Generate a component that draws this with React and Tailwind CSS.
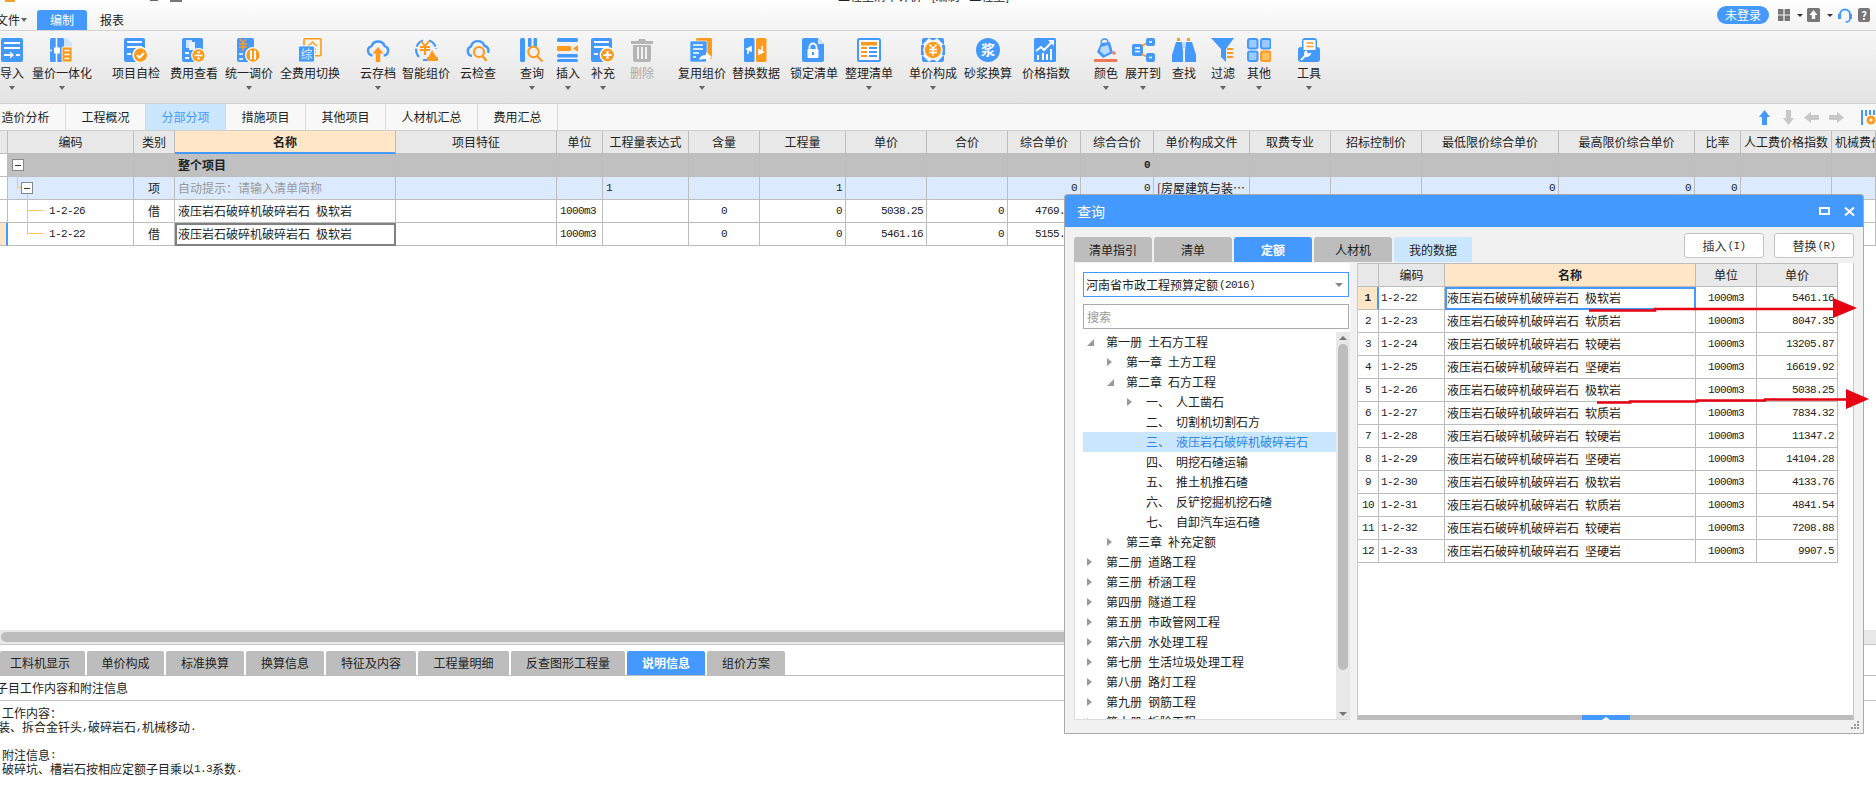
import React from "react";

const B = "#4499ff";
const O = "#ff9a1e";
const mono = "font-['Liberation_Mono'] text-[11px] tracking-[-0.6px]";

function Ic({ children, w = 24, h = 24 }) {
  return (
    <svg width={w} height={h} viewBox="0 0 24 24" className="block shrink-0">
      {children}
    </svg>
  );
}

// toolbar icons, one 24x24 drawing each
const icons = {
  import: (
    <>
      <rect x="1" width="22" height="24" rx="2" fill={B} />
      <path d="M4 5h16M4 10h16M16 17h4" stroke="#fff" strokeWidth="2" />
      <path d="M4 17h7" stroke="#fff" strokeWidth="2" />
      <path d="M10 13.5l4 3.5-4 3.5z" fill="#fff" />
    </>
  ),
  unify: (
    <>
      <rect x="0" width="14" height="24" rx="1.5" fill={B} />
      <path d="M14 0h3l5 5v6h-8z" fill="#cfe4fb" />
      <path d="M6.5 0v24" stroke="#fff" strokeWidth="1.5" />
      <rect x="4" y="9.5" width="6" height="6" fill="#fff" />
      <path d="M0 12.5h2" stroke="#fff" strokeWidth="1.5" />
      <rect x="12" y="9" width="10" height="15" rx="1" fill={O} stroke="#fff" strokeWidth=".8" />
      <path d="M14.5 12.5h5M14.5 16.5h5M14.5 20.5h5" stroke="#fff" strokeWidth="1.7" />
    </>
  ),
  check: (
    <>
      <rect width="21" height="24" rx="2" fill={B} />
      <path d="M3 4h15M3 9h15M3 16h4" stroke="#fff" strokeWidth="1.8" />
      <circle cx="16.5" cy="17" r="7.4" fill={O} stroke="#fff" strokeWidth="1.5" />
      <path d="M13 17l2.5 2.7 4.5-4.7" fill="none" stroke="#fff" strokeWidth="2" />
    </>
  ),
  fee: (
    <>
      <rect width="21" height="24" rx="2" fill={B} />
      <rect x="4" y="2" width="6" height="8" fill="#cfe4fb" />
      <rect x="7" y="4" width="6" height="8" fill="#e8f2fe" />
      <path d="M3 15h4M3 20h4" stroke="#fff" strokeWidth="1.8" />
      <circle cx="16.5" cy="17.5" r="6.8" fill={O} stroke="#fff" strokeWidth="1.2" />
      <path d="M12.5 17.5h8" stroke="#fff" strokeWidth="1.6" />
      <circle cx="16.5" cy="14.5" r="1.2" fill="#fff" />
      <circle cx="16.5" cy="20.5" r="1.2" fill="#fff" />
    </>
  ),
  adjust: (
    <>
      <rect width="17" height="24" rx="2" fill={B} />
      <path d="M3 1l3 4 3-4M2 6h8M2 9h8M6 5v8" fill="none" stroke={O} strokeWidth="1.6" />
      <path d="M2 16h4M2 21h4" stroke="#fff" strokeWidth="1.6" />
      <circle cx="16" cy="17" r="7.4" fill={O} stroke="#fff" strokeWidth="1.4" />
      <path d="M14 12.5v9M18 12.5v9" stroke="#fff" strokeWidth="2" />
    </>
  ),
  full: (
    <>
      <rect x="6" y="0.8" width="17" height="17" rx="1" fill="#fff5e6" stroke={O} strokeWidth="1.6" />
      <path d="M10 8l4.5-4 4.5 4M11 11h7M11 14h7" fill="none" stroke={O} strokeWidth="1.3" />
      <rect x="0.5" y="8" width="16" height="16" rx="1.5" fill={B} stroke="#fff" strokeWidth=".8" />
      <text x="8.5" y="20.5" textAnchor="middle" fontSize="12" fill="#dcecff">综</text>
    </>
  ),
  cloudUp: (
    <>
      <path d="M6.5 17.5a4.8 4.8 0 0 1-1-9.4 7 7 0 0 1 13.2 0 4.8 4.8 0 0 1-1 9.4" fill="none" stroke={B} strokeWidth="2.4" />
      <path d="M12 9l-5.5 6.5h3.3V24h4.4v-8.5h3.3z" fill={O} />
    </>
  ),
  smart: (
    <>
      <path d="M5 19A10 10 0 0 1 9 2.5M15 2.5A10 10 0 0 1 22 11M9 22h6" fill="none" stroke={B} strokeWidth="2.2" strokeDasharray="9 2" />
      <path d="M7 3l4 5 4-5M6 9h10M6 12h10M11 8v9" fill="none" stroke={O} strokeWidth="2" />
      <path d="M18 12l4.5 7h1.5v4h-11v-4h1.5z" fill={O} />
    </>
  ),
  cloudSearch: (
    <>
      <path d="M6 18a5 5 0 0 1-1-9.6 7 7 0 0 1 13.4-.6 5 5 0 0 1 3.6 7" fill="none" stroke={B} strokeWidth="2.4" />
      <circle cx="13" cy="14" r="5" fill="none" stroke={O} strokeWidth="2.2" />
      <path d="M16.5 18l4 5" stroke={O} strokeWidth="2.4" />
    </>
  ),
  query: (
    <>
      <rect x="0" width="5" height="24" rx="1.5" fill={B} />
      <rect x="8" width="3.5" height="9" rx="1" fill={B} />
      <rect x="13.5" width="3.5" height="9" rx="1" fill={B} />
      <circle cx="13.5" cy="14" r="5.2" fill="none" stroke={O} strokeWidth="2" />
      <path d="M17 18l5.5 5.5" stroke={O} strokeWidth="2.2" />
    </>
  ),
  insert: (
    <>
      <rect x="1" y="0" width="21" height="4" rx="1.5" fill={B} />
      <rect x="1" y="8" width="14" height="5" rx="1" fill={O} />
      <path d="M22 7v7l-5-3.5z" fill={O} />
      <rect x="1" y="16" width="21" height="3.5" rx="1.5" fill={B} />
      <rect x="1" y="21" width="21" height="3" rx="1.5" fill={B} />
    </>
  ),
  add: (
    <>
      <rect width="21" height="24" rx="2" fill={B} />
      <path d="M3 4h15M3 9h15M3 16h4" stroke="#fff" strokeWidth="1.8" />
      <circle cx="16.5" cy="17" r="7.2" fill={O} stroke="#fff" strokeWidth="1.4" />
      <path d="M16.5 13v8M12.5 17h8" stroke="#fff" strokeWidth="2.2" />
    </>
  ),
  trash: (
    <>
      <path d="M9 1h6l1 2h7v3H1V3h7z" fill="#b5b5b5" />
      <path d="M3 7h18v15a2 2 0 0 1-2 2H5a2 2 0 0 1-2-2z" fill="#b5b5b5" />
      <path d="M8 9v12M12 9v12M16 9v12" stroke="#fff" strokeWidth="1.6" />
    </>
  ),
  reuse: (
    <>
      <rect x="6" width="16" height="21" rx="1.5" fill={O} />
      <rect x="0" y="3" width="17" height="21" rx="1.5" fill={B} stroke="#fff" strokeWidth=".6" />
      <path d="M3 7h10M3 11h10M3 15h6M3 19h3" stroke="#fff" strokeWidth="1.5" />
      <path d="M9 22c1-4 4-5 7-5v-3l6 5-6 5v-3c-2 0-5 0-7 1z" fill="#fff" />
    </>
  ),
  replace: (
    <>
      <rect x="0" width="10.5" height="24" rx="1.5" fill={B} />
      <rect x="12" width="10.5" height="24" rx="1.5" fill={O} />
      <path d="M4 16v-5M3 11l4-2v4z" stroke="#fff" strokeWidth="1.6" fill="#fff" />
      <path d="M18 8v6M19 14l-4 2v-4z" stroke="#fff" strokeWidth="1.6" fill="#fff" />
    </>
  ),
  lock: (
    <>
      <path d="M2 0h14l6 6v16a2 2 0 0 1-2 2H2a2 2 0 0 1-2-2V2a2 2 0 0 1 2-2z" fill={B} />
      <path d="M16 0l6 6h-6z" fill="#cfe4fb" />
      <path d="M7.5 12V9a3.5 3.5 0 0 1 7 0v3" fill="none" stroke="#fff" strokeWidth="1.8" />
      <rect x="5.5" y="11" width="11" height="9" rx="1" fill="#fff" />
      <path d="M11 14v3" stroke={B} strokeWidth="2" />
    </>
  ),
  arrange: (
    <>
      <rect x="1" y="1" width="22" height="22" rx="1.5" fill="#fff" stroke={B} strokeWidth="2" />
      <rect x="4" y="4" width="16" height="3.5" fill={O} />
      <path d="M4 10h6M4 14h6M4 18h6" stroke={O} strokeWidth="2" />
      <path d="M12 10h8M12 14h8M12 18h8" stroke={B} strokeWidth="2" />
    </>
  ),
  unit: (
    <>
      <path d="M1 7V2a2 2 0 0 1 2-2h5zM23 7V2a2 2 0 0 0-2-2h-5zM1 17v5a2 2 0 0 0 2 2h5zM23 17v5a2 2 0 0 1-2 2h-5z" fill={B} />
      <rect x="0" y="7" width="3" height="10" fill={B} />
      <rect x="21" y="7" width="3" height="10" fill={B} />
      <path d="M8 0h8L12 3zM8 24h8l-4-3z" fill={B} />
      <circle cx="12" cy="12" r="9" fill={O} stroke="#fff" strokeWidth="1.6" />
      <path d="M8.5 6.5l3.5 4 3.5-4M8 11.5h8M8 14.5h8M12 10.5v7" fill="none" stroke="#fff" strokeWidth="1.5" />
    </>
  ),
  mortar: (
    <>
      <circle cx="12" cy="12" r="12" fill={B} />
      <text x="12" y="17" textAnchor="middle" fontSize="14" fontWeight="700" fill="#fff">浆</text>
    </>
  ),
  index: (
    <>
      <rect x="0" width="22" height="24" rx="1.5" fill={B} />
      <path d="M2 13l5-4 3 3 8-8" fill="none" stroke="#fff" strokeWidth="2" />
      <path d="M14 2h6v6z" fill="#fff" />
      <path d="M4 22v-5M9 22v-7M13 22v-6M17 22V11" stroke="#fff" strokeWidth="2" />
    </>
  ),
  color: (
    <>
      <path d="M7 5l9-1 3 11-10 5-6-6z" fill={B} />
      <path d="M7 9l7-2 2 7-6 3-4-4z" fill="#bcd9fb" />
      <path d="M7 5c0-3 2-4 4-4s3 1 3 4" fill="none" stroke={B} strokeWidth="1.4" />
      <circle cx="20" cy="15" r="1.8" fill="#f47a55" />
      <rect x="0" y="21" width="23" height="3" fill="#f47a55" />
    </>
  ),
  expand: (
    <>
      <rect x="1" y="6" width="11" height="12" rx="2" fill={B} />
      <path d="M4 10h5M4 13.5h5" stroke="#fff" strokeWidth="1.4" />
      <path d="M11 8l5-3M11 16l5 3" stroke={O} strokeWidth="1.6" />
      <rect x="15" y="0" width="9" height="8" rx="2" fill={B} />
      <rect x="15" y="15" width="9" height="9" rx="2" fill={B} />
      <path d="M18 4h3M18 19.5h3" stroke="#fff" strokeWidth="1.4" />
    </>
  ),
  find: (
    <>
      <path d="M5 0h3v3H5zM15 0h3v3h-3z" fill={O} />
      <path d="M4 4h6l1 9v11H0v-7z" fill={B} />
      <path d="M20 4h-6l-1 9v11h11v-7z" fill={B} />
      <path d="M11 4h2v6h-2z" fill="#bcd9fb" />
    </>
  ),
  filter: (
    <>
      <path d="M0 0h23l-8 11v13l-5-5v-8z" fill={B} />
      <path d="M16 11h6M16 15h6M16 19h6" stroke={O} strokeWidth="1.8" />
    </>
  ),
  more: (
    <>
      <rect x="1" y="1" width="9.5" height="9.5" rx="2" fill="#9cc9ff" stroke={B} strokeWidth="2" />
      <rect x="14" y="1" width="9.5" height="9.5" rx="2" fill="#9cc9ff" stroke={B} strokeWidth="2" />
      <rect x="1" y="13.5" width="9.5" height="9.5" rx="2" fill="#9cc9ff" stroke={B} strokeWidth="2" />
      <rect x="14" y="13.5" width="9.5" height="9.5" rx="2" fill="#ffc166" stroke={O} strokeWidth="2" />
    </>
  ),
  tool: (
    <>
      <path d="M5 10V3a3 3 0 0 1 3-3h9a3 3 0 0 1 3 3v7" fill={B} />
      <rect x="1" y="9" width="22" height="15" rx="3" fill={B} />
      <rect x="6.5" y="2" width="12" height="10" fill="#fff" />
      <path d="M9.5 5h7M9.5 8.5h7" stroke={O} strokeWidth="1.6" />
      <path d="M4 22l6-6M9 13.5c-1.5 1-1.5 3 0 4.5 2 .5 3.5-.5 4-2l-2 .5-1.2-1.2z" stroke="#fff" strokeWidth="1.8" fill="#fff" />
    </>
  ),
};

const tools = [
  { k: "import", t: "导入", w: "w-[24px]", ml: "", c: 1 },
  { k: "unify", t: "量价一体化", w: "w-[60px]", ml: "ml-[8px]", c: 1 },
  { k: "check", t: "项目自检", w: "w-[48px]", ml: "ml-[20px]" },
  { k: "fee", t: "费用查看", w: "w-[48px]", ml: "ml-[10px]" },
  { k: "adjust", t: "统一调价", w: "w-[48px]", ml: "ml-[7px]", c: 1 },
  { k: "full", t: "全费用切换", w: "w-[60px]", ml: "ml-[7px]" },
  { k: "cloudUp", t: "云存档", w: "w-[36px]", ml: "ml-[20px]", c: 1 },
  { k: "smart", t: "智能组价", w: "w-[48px]", ml: "ml-[6px]" },
  { k: "cloudSearch", t: "云检查", w: "w-[36px]", ml: "ml-[10px]" },
  { k: "query", t: "查询", w: "w-[24px]", ml: "ml-[24px]", c: 1 },
  { k: "insert", t: "插入", w: "w-[24px]", ml: "ml-[12px]", c: 1 },
  { k: "add", t: "补充", w: "w-[24px]", ml: "ml-[11px]", c: 1 },
  { k: "trash", t: "删除", w: "w-[24px]", ml: "ml-[15px]", gray: 1 },
  { k: "reuse", t: "复用组价", w: "w-[48px]", ml: "ml-[24px]", c: 1 },
  { k: "replace", t: "替换数据", w: "w-[48px]", ml: "ml-[6px]" },
  { k: "lock", t: "锁定清单", w: "w-[48px]", ml: "ml-[10px]" },
  { k: "arrange", t: "整理清单", w: "w-[48px]", ml: "ml-[7px]", c: 1 },
  { k: "unit", t: "单价构成", w: "w-[48px]", ml: "ml-[16px]", c: 1 },
  { k: "mortar", t: "砂浆换算", w: "w-[48px]", ml: "ml-[7px]" },
  { k: "index", t: "价格指数", w: "w-[48px]", ml: "ml-[10px]" },
  { k: "color", t: "颜色", w: "w-[24px]", ml: "ml-[24px]", c: 1 },
  { k: "expand", t: "展开到", w: "w-[36px]", ml: "ml-[7px]", c: 1 },
  { k: "find", t: "查找", w: "w-[24px]", ml: "ml-[11px]" },
  { k: "filter", t: "过滤", w: "w-[24px]", ml: "ml-[15px]", c: 1 },
  { k: "more", t: "其他", w: "w-[24px]", ml: "ml-[12px]", c: 1 },
  { k: "tool", t: "工具", w: "w-[24px]", ml: "ml-[26px]", c: 1 },
];

const pageTabs = [
  ["造价分析", "w-[66px] pr-[14px]"],
  ["工程概况", "w-[80px]"],
  ["分部分项", "w-[80px]"],
  ["措施项目", "w-[80px]"],
  ["其他项目", "w-[80px]"],
  ["人材机汇总", "w-[92px]"],
  ["费用汇总", "w-[80px]"],
];

const cols =
  "grid grid-cols-[8px_126px_41px_221px_161px_46px_86px_71px_86px_81px_81px_73px_73px_96px_81px_91px_137px_136px_46px_91px_44px]";
const heads = ["", "编码", "类别", "名称", "项目特征", "单位", "工程量表达式", "含量", "工程量", "单价", "合价", "综合单价", "综合合价", "单价构成文件", "取费专业", "招标控制价", "最低限价综合单价", "最高限价综合单价", "比率", "人工费价格指数", "机械费价格指数"];
const rightCols = [8, 9, 10, 11, 12, 16, 17, 18];
const monoCols = [5, 6, 7, 8, 9, 10, 11, 12, 16, 17, 18];

const rows = [
  { bg: "bg-[#c0c0c0]", cells: { 3: "整个项目", 12: "0" }, bold: true },
  { bg: "bg-[#dceafe]", cells: { 2: "项", 3: "自动提示：请输入清单简称", 6: "1", 8: "1", 11: "0", 12: "0", 13: "[房屋建筑与装…", 16: "0", 17: "0", 18: "0" } },
  { bg: "bg-white", cells: { 1: "1-2-26", 2: "借", 3: "液压岩石破碎机破碎岩石\u2002极软岩", 5: "1000m3", 7: "0", 8: "0", 9: "5038.25", 10: "0", 11: "4769.36" } },
  { bg: "bg-white", cells: { 1: "1-2-22", 2: "借", 3: "液压岩石破碎机破碎岩石\u2002极软岩", 5: "1000m3", 7: "0", 8: "0", 9: "5461.16", 10: "0", 11: "5155.18" } },
];

const bottomTabs = [
  ["工料机显示", "w-[85px] pr-[5px]"],
  ["单价构成", "w-[77px]"],
  ["标准换算", "w-[78px]"],
  ["换算信息", "w-[78px]"],
  ["特征及内容", "w-[90px]"],
  ["工程量明细", "w-[91px]"],
  ["反查图形工程量", "w-[114px]"],
  ["说明信息", "w-[78px]"],
  ["组价方案", "w-[78px]"],
];

const tree = [
  ["第一册\u2002土石方工程", "pl-[4px]", "open"],
  ["第一章\u2002土方工程", "pl-[24px]", "closed"],
  ["第二章\u2002石方工程", "pl-[24px]", "open"],
  ["一、\u2002人工凿石", "pl-[44px]", "closed"],
  ["二、\u2002切割机切割石方", "pl-[44px]", ""],
  ["三、\u2002液压岩石破碎机破碎岩石", "pl-[44px]", "", true],
  ["四、\u2002明挖石碴运输", "pl-[44px]", ""],
  ["五、\u2002推土机推石碴", "pl-[44px]", ""],
  ["六、\u2002反铲挖掘机挖石碴", "pl-[44px]", ""],
  ["七、\u2002自卸汽车运石碴", "pl-[44px]", ""],
  ["第三章\u2002补充定额", "pl-[24px]", "closed"],
  ["第二册\u2002道路工程", "pl-[4px]", "closed"],
  ["第三册\u2002桥涵工程", "pl-[4px]", "closed"],
  ["第四册\u2002隧道工程", "pl-[4px]", "closed"],
  ["第五册\u2002市政管网工程", "pl-[4px]", "closed"],
  ["第六册\u2002水处理工程", "pl-[4px]", "closed"],
  ["第七册\u2002生活垃圾处理工程", "pl-[4px]", "closed"],
  ["第八册\u2002路灯工程", "pl-[4px]", "closed"],
  ["第九册\u2002钢筋工程", "pl-[4px]", "closed"],
  ["第十册\u2002拆除工程", "pl-[4px]", "closed"],
];

const quotas = [
  ["1-2-22", "极软岩", "5461.16"],
  ["1-2-23", "软质岩", "8047.35"],
  ["1-2-24", "较硬岩", "13205.87"],
  ["1-2-25", "坚硬岩", "16619.92"],
  ["1-2-26", "极软岩", "5038.25"],
  ["1-2-27", "软质岩", "7834.32"],
  ["1-2-28", "较硬岩", "11347.2"],
  ["1-2-29", "坚硬岩", "14104.28"],
  ["1-2-30", "极软岩", "4133.76"],
  ["1-2-31", "软质岩", "4841.54"],
  ["1-2-32", "较硬岩", "7208.88"],
  ["1-2-33", "坚硬岩", "9907.5"],
];

const qCols = "grid grid-cols-[21px_66px_251px_61px_81px] w-[480px]";
const qCell = "h-[23px] border-r border-b border-[#bdbdbd] flex items-center overflow-hidden whitespace-nowrap";

function Caret({ className = "" }) {
  return <span className={"block w-0 h-0 border-l-[3px] border-r-[3px] border-t-[4px] border-l-transparent border-r-transparent border-t-[#666] " + className} />;
}

function ToolItem({ item }) {
  return (
    <div className={"shrink-0 flex flex-col items-center " + item.w + " " + item.ml}>
      <Ic>{icons[item.k]}</Ic>
      <div className={"mt-[3px] h-[16px] leading-[16px] whitespace-nowrap " + (item.gray ? "text-[#aaa]" : "")}>{item.t}</div>
      {item.c ? <Caret className="mt-[5px]" /> : null}
    </div>
  );
}

function MinusBox({ className }) {
  return (
    <span className={"absolute w-[12px] h-[12px] bg-white border border-[#888] flex items-center justify-center z-10 " + className}>
      <span className="block w-[6px] h-px bg-[#333]" />
    </span>
  );
}

function TreeArrow({ type }) {
  if (type === "open") {
    return (
      <svg width="7" height="7" viewBox="0 0 7 7" className="block">
        <path d="M7 0v7H0z" fill="#999" />
      </svg>
    );
  }
  if (type === "closed") {
    return (
      <svg width="5" height="8" viewBox="0 0 5 8" className="block">
        <path d="M0 0l5 4-5 4z" fill="#999" />
      </svg>
    );
  }
  return null;
}

function CodeCell({ index }) {
  return (
    <>
      {index === 0 && <MinusBox className="left-[4px] top-[5px]" />}
      {index === 1 && (
        <>
          <MinusBox className="left-[13px] top-[5px]" />
          <span className="absolute left-[9px] top-[-6px] w-px h-[17px] bg-[#ffc266]" />
          <span className="absolute left-[9px] top-[10px] w-[5px] h-px bg-[#ffc266]" />
          <span className="absolute left-[19px] top-[17px] w-px h-[6px] bg-[#ffc266]" />
        </>
      )}
      {index === 2 && (
        <>
          <span className="absolute left-[19px] top-0 w-px h-[23px] bg-[#ffc266]" />
          <span className="absolute left-[19px] top-[10px] w-[17px] h-px bg-[#ffc266]" />
        </>
      )}
      {index === 3 && (
        <>
          <span className="absolute left-[19px] top-0 w-px h-[11px] bg-[#ffc266]" />
          <span className="absolute left-[19px] top-[10px] w-[17px] h-px bg-[#ffc266]" />
        </>
      )}
    </>
  );
}

function MainTable() {
  return (
    <div className="h-[499px] shrink-0 overflow-hidden bg-white">
      <div className={cols + " bg-[#e8e8e8]"}>
        {heads.map((h, i) => (
          <div
            key={i}
            className={
              "h-[23px] flex items-center border-r border-b border-[#bdbdbd] overflow-hidden whitespace-nowrap " +
              (i === 20 ? "justify-start pl-[3px] " : "justify-center ") +
              (i === 3 ? "bg-[#ffe6c7] font-bold border-b-2 border-b-[#4499ff]" : "")
            }
          >
            {h}
          </div>
        ))}
      </div>
      {rows.map((row, r) => (
        <div key={r} className={cols}>
          {heads.map((_, i) => {
            const val = row.cells[i];
            let cls = "relative h-[23px] flex items-center border-b border-[#bdbdbd] whitespace-nowrap min-w-0 ";
            if (i === 0) {
              cls += r === 3 ? "bg-[#ffe6c7] border-r-2 border-r-[#4499ff] " : "bg-white border-r border-r-[#bdbdbd] ";
            } else {
              cls += row.bg + " border-r border-r-[#bdbdbd] ";
            }
            if (i === 0) cls += "";
            else if (rightCols.includes(i)) cls += "justify-end pr-[3px] ";
            else if (i === 2 || i === 7) cls += "justify-center ";
            else if (i === 1) cls += "pl-[41px] ";
            else cls += "pl-[3px] ";
            if (r === 3 && i === 3) cls += "outline-2 -outline-offset-2 outline-[#808080] ";
            return (
              <div key={i} className={cls}>
                {i === 1 && <CodeCell index={r} />}
                {val !== undefined && (
                  <span
                    className={
                      (monoCols.includes(i) || i === 1 ? mono + " " : "") +
                      (row.bold ? "font-bold " : "") +
                      (r === 1 && i === 3 ? "text-[#999]" : "")
                    }
                  >
                    {val}
                  </span>
                )}
              </div>
            );
          })}
        </div>
      ))}
    </div>
  );
}

function QueryDialog() {
  return (
    <div className="absolute left-[1064px] top-[194px] w-[800px] h-[540px] bg-[#f1f1f1] border border-[#aaa] rounded-t-[3px] z-20 flex flex-col">
      <div className="h-[32px] shrink-0 bg-[#4499ff] rounded-t-[2px] flex items-center pl-[12px] text-white text-[14px]">
        查询
        <span className="ml-auto mr-[14px] w-[11px] h-[8px] border-2 border-white" />
        <svg width="11" height="9" viewBox="0 0 11 9" className="block mr-[8px]">
          <path d="M1 .5l9 8M10 .5l-9 8" stroke="#fff" strokeWidth="2" />
        </svg>
      </div>
      <div className="h-[36px] shrink-0 flex items-start pl-[9px]">
        <div className="mt-[10px] flex gap-[2px]">
          {["清单指引", "清单", "定额", "人材机", "我的数据"].map((t) => (
            <div
              key={t}
              className={
                "w-[78px] h-[25px] rounded-t-[3px] flex items-center justify-center " +
                (t === "定额" ? "bg-[#4499ff] text-white font-bold" : t === "我的数据" ? "bg-[#cbe6ff]" : "bg-[#bdbdbd]")
              }
            >
              {t}
            </div>
          ))}
        </div>
        <div className="ml-auto mr-[9px] mt-[6px] flex gap-[10px]">
          {["插入", "替换"].map((t, i) => (
            <button key={t} className="w-[80px] h-[25px] bg-white border border-[#c4c4c4] rounded-[3px] flex items-center justify-center text-[#333]">
              {t}
              <span className={mono + " ml-px"}>{i === 0 ? "(I)" : "(R)"}</span>
            </button>
          ))}
        </div>
      </div>
      <div className="h-[457px] shrink-0 flex pl-[9px]">
        <div className="w-[276px] bg-white border-l border-b border-[#dcdcdc] pl-[8px] pt-[9px] flex flex-col">
          <div className="w-[266px] h-[25px] shrink-0 border border-[#4499ff] flex items-center pl-[2px] pr-[5px]">
            河南省市政工程预算定额<span className={mono + " ml-[1px]"}>(2016)</span>
            <span className="ml-auto block w-0 h-0 border-l-[4px] border-r-[4px] border-t-[4px] border-l-transparent border-r-transparent border-t-[#888]" />
          </div>
          <div className="w-[266px] h-[25px] shrink-0 mt-[7px] border border-[#aaa] flex items-center pl-[3px] text-[#999]">搜索</div>
          <div className="h-[388px] mt-[3px] flex overflow-hidden">
            <div className="w-[253px] overflow-hidden">
              {tree.map(([t, pad, arrow, sel]) => (
                <div key={t} className={"h-[20px] shrink-0 flex items-center whitespace-nowrap " + pad + (sel ? " bg-[#cbe6ff] text-[#2b84e8]" : "")}>
                  <span className="w-[19px] shrink-0">
                    <TreeArrow type={arrow} />
                  </span>
                  {t}
                </div>
              ))}
            </div>
            <div className="w-[14px] bg-[#e8e8e8] flex flex-col items-center">
              <span className="mt-[4px] block w-0 h-0 border-l-[4px] border-r-[4px] border-b-[4px] border-l-transparent border-r-transparent border-b-[#777]" />
              <span className="mt-[4px] w-[10px] h-[326px] rounded-[5px] bg-[#bdbdbd]" />
              <span className="mt-auto mb-[3px] block w-0 h-0 border-l-[4px] border-r-[4px] border-t-[4px] border-l-transparent border-r-transparent border-t-[#777]" />
            </div>
          </div>
        </div>
        <div className="ml-[7px] w-[497px] bg-white border-x border-[#c8c8c8] flex flex-col">
          <div className={qCols + " bg-[#e8e8e8] border-t border-[#bdbdbd] h-[24px]"}>
            {["", "编码", "名称", "单位", "单价"].map((h, i) => (
              <div key={i} className={qCell + " justify-center " + (i === 2 ? "bg-[#ffe6c7] font-bold" : "")}>
                {h}
              </div>
            ))}
          </div>
          {quotas.map(([code, rock, price], i) => (
            <div key={code} className={qCols}>
              <div className={qCell + " justify-center " + (i === 0 ? "bg-[#ffe6c7] font-bold border-r-2 border-r-[#4499ff]" : "")}>
                <span className={mono}>{i + 1}</span>
              </div>
              <div className={qCell + " pl-[2px]"}>
                <span className={mono}>{code}</span>
              </div>
              <div className={qCell + " pl-[2px] " + (i === 0 ? "outline-2 -outline-offset-2 outline-[#4499ff]" : "")}>
                液压岩石破碎机破碎岩石{"\u2002"}
                {rock}
              </div>
              <div className={qCell + " justify-center"}>
                <span className={mono}>1000m3</span>
              </div>
              <div className={qCell + " justify-end pr-[3px]"}>
                <span className={mono}>{price}</span>
              </div>
            </div>
          ))}
          <div className="mt-auto h-[5px] bg-[#bdbdbd] flex justify-center">
            <span className="w-[48px] h-[5px] bg-[#4499ff] flex items-end justify-center">
              <span className="block w-0 h-0 border-l-[4px] border-r-[4px] border-b-[3px] border-l-transparent border-r-transparent border-b-white" />
            </span>
          </div>
        </div>
      </div>
      <svg width="10" height="9" viewBox="0 0 10 9" className="absolute right-[3px] bottom-[3px]">
        <path d="M7 0h2v2H7zM4 3h2v2H4zM7 3h2v2H7zM1 6h2v2H1zM4 6h2v2H4zM7 6h2v2H7z" fill="#999" />
      </svg>
    </div>
  );
}

export default function App() {
  return (
    <div className="relative w-[1876px] h-[797px] overflow-hidden bg-white flex flex-col text-[12px] leading-[14px] text-[#222] font-['Noto_Sans_CJK_SC','Liberation_Sans',sans-serif]">
      {/* title bar, the window is cut off at the top */}
      <div className="relative h-[31px] shrink-0 bg-gradient-to-b from-white to-[#f3f3f3] border-b border-[#d4d4d4] flex items-end overflow-hidden">
        <span className="absolute left-[838px] top-[-11px] whitespace-nowrap">工程量清单计价 - [编制 - 工程量]</span>
        <span className="absolute left-[5px] top-0 w-[10px] h-[2px] bg-[#f0a030]" />
        <span className="absolute left-[150px] top-0 w-[8px] h-[1px] bg-[#666]" />
        <span className="absolute left-[170px] top-0 w-[12px] h-[2px] bg-[#777]" />
        <div className="h-[20px] flex items-center -ml-[4px] w-[41px] shrink-0">
          文件
          <Caret className="ml-[1px] border-l-[2px] border-r-[2px] border-t-[3px]" />
        </div>
        <div className="w-[50px] h-[20px] bg-[#4499ff] text-white rounded-t-[3px] flex items-center justify-center">编制</div>
        <div className="ml-[13px] h-[20px] flex items-center">报表</div>
        <div className="ml-auto self-center flex items-center pr-[6px]">
          <span className="w-[52px] h-[18px] rounded-full bg-[#4499ff] text-white flex items-center justify-center">未登录</span>
          <svg width="12" height="12" viewBox="0 0 12 12" className="ml-[9px]">
            <path d="M0 0h5.4v5.4H0zM6.6 0H12v5.4H6.6zM0 6.6h5.4V12H0zM6.6 6.6H12V12H6.6z" fill="#777" />
          </svg>
          <span className="ml-[7px] block w-0 h-0 border-l-[3px] border-r-[3px] border-t-[3px] border-l-transparent border-r-transparent border-t-[#333]" />
          <svg width="13" height="14" viewBox="0 0 13 14" className="ml-[4px]">
            <rect width="13" height="14" rx="1.5" fill="#777" />
            <path d="M6.5 2l4 5H8.2v4H4.8V7H2.5z" fill="#fff" />
          </svg>
          <span className="ml-[7px] block w-0 h-0 border-l-[3px] border-r-[3px] border-t-[3px] border-l-transparent border-r-transparent border-t-[#333]" />
          <svg width="14" height="15" viewBox="0 0 14 15" className="ml-[5px]">
            <path d="M2 9V6.5a5 5 0 0 1 10 0V9" fill="none" stroke="#4499ff" strokeWidth="2" />
            <rect x="0" y="6" width="3" height="5" fill="#4499ff" />
            <rect x="11" y="6" width="3" height="5" fill="#4499ff" />
            <path d="M12 10.5c0 2.5-2 3.5-4.500 3.500" fill="none" stroke="#4499ff" strokeWidth="1.5" />
          </svg>
          <span className="ml-[6px] w-[12px] h-[14px] rounded-[2px] bg-[#777] text-white font-bold flex items-center justify-center text-[11px]">?</span>
        </div>
      </div>

      {/* toolbar */}
      <div className="h-[73px] shrink-0 bg-gradient-to-b from-[#f6f6f6] to-[#e3e3e3] border-b border-[#d0d0d0] flex pt-[7px] overflow-hidden">
        {tools.map((it) => (
          <ToolItem key={it.k} item={it} />
        ))}
      </div>

      {/* page tabs */}
      <div className="h-[27px] shrink-0 bg-[#f8f8f8] border-b border-[#cfcfcf] flex">
        {pageTabs.map(([t, w]) => (
          <div key={t} className={"h-full flex items-center justify-center border-r border-[#d8d8d8] " + w + (t === "分部分项" ? " bg-[#cbe6ff] text-[#4499ff]" : "")}>
            {t}
          </div>
        ))}
        <div className="ml-auto flex items-center">
          <svg width="11" height="15" viewBox="0 0 11 15"><path d="M5.5 0L11 7H8v8H3V7H0z" fill="#4499ff" /></svg>
          <svg width="11" height="15" viewBox="0 0 11 15" className="ml-[13px]"><path d="M5.5 15L0 8h3V0h5v8h3z" fill="#c8c8c8" /></svg>
          <svg width="15" height="11" viewBox="0 0 15 11" className="ml-[10px]"><path d="M0 5.5L7 0v3h8v5H7v3z" fill="#c8c8c8" /></svg>
          <svg width="15" height="11" viewBox="0 0 15 11" className="ml-[10px]"><path d="M15 5.5L8 0v3H0v5h8v3z" fill="#c8c8c8" /></svg>
          <svg width="15" height="15" viewBox="0 0 15 15" className="ml-[17px]">
            <path d="M0 0h2v15H0zM4 0h2v6H4zM8 0h2v5H8zM12 0h2v5h-2z" fill="#4499ff" />
            <circle cx="10" cy="10" r="4.5" fill="#ff9a1e" />
            <circle cx="10" cy="10" r="1.5" fill="#fff" />
          </svg>
        </div>
      </div>

      <MainTable />

      {/* horizontal scrollbar */}
      <div className="h-[15px] shrink-0 bg-[#e8e8e8] border-b border-[#c8c8c8] pt-[2px] pl-px">
        <div className="w-[1300px] h-[10px] rounded-[5px] bg-[#bdbdbd]" />
      </div>
      <div className="h-[6px] shrink-0" />

      {/* bottom tabs */}
      <div className="h-[25px] shrink-0 border-b border-[#bdbdbd] flex gap-[2px]">
        {bottomTabs.map(([t, w]) => (
          <div key={t} className={"h-[24px] rounded-t-[2px] flex items-center justify-center " + w + (t === "说明信息" ? " bg-[#4499ff] text-white font-bold" : " bg-[#bdbdbd]")}>
            {t}
          </div>
        ))}
      </div>
      <div className="h-[25px] shrink-0 border-b border-[#c4c4c4] flex items-center -ml-[4px] w-[1880px]">子目工作内容和附注信息</div>
      <div className="pt-[5px] whitespace-nowrap">
        <div className="h-[14px] flex items-center pl-[2px]">工作内容：</div>
        <div className="h-[14px] flex items-center -ml-[14px]">
          安装、拆合金钎头<span className={mono}>,</span>破碎岩石<span className={mono}>,</span>机械移动<span className={mono}>.</span>
        </div>
        <div className="h-[14px]" />
        <div className="h-[14px] flex items-center pl-[2px]">
          附注信息<span className={mono}>:</span>
        </div>
        <div className="h-[14px] flex items-center pl-[2px]">
          破碎坑、槽岩石按相应定额子目乘以<span className={mono}>1.3</span>系数<span className={mono}>.</span>
        </div>
      </div>

      <QueryDialog />

      {/* red arrows drawn over the screenshot */}
      <svg width="1876" height="797" className="absolute inset-0 z-30 pointer-events-none">
        <path d="M1589 310.5h66v-1.5h180" fill="none" stroke="#e60012" strokeWidth="2.5" />
        <path d="M1833 298l24 10-24 10z" fill="#e60012" />
        <path d="M1597 402.5h33v-1h67v-1h68v-1h82" fill="none" stroke="#e60012" strokeWidth="2.5" />
        <path d="M1846 389l23 10-23 10z" fill="#e60012" />
      </svg>
    </div>
  );
}
